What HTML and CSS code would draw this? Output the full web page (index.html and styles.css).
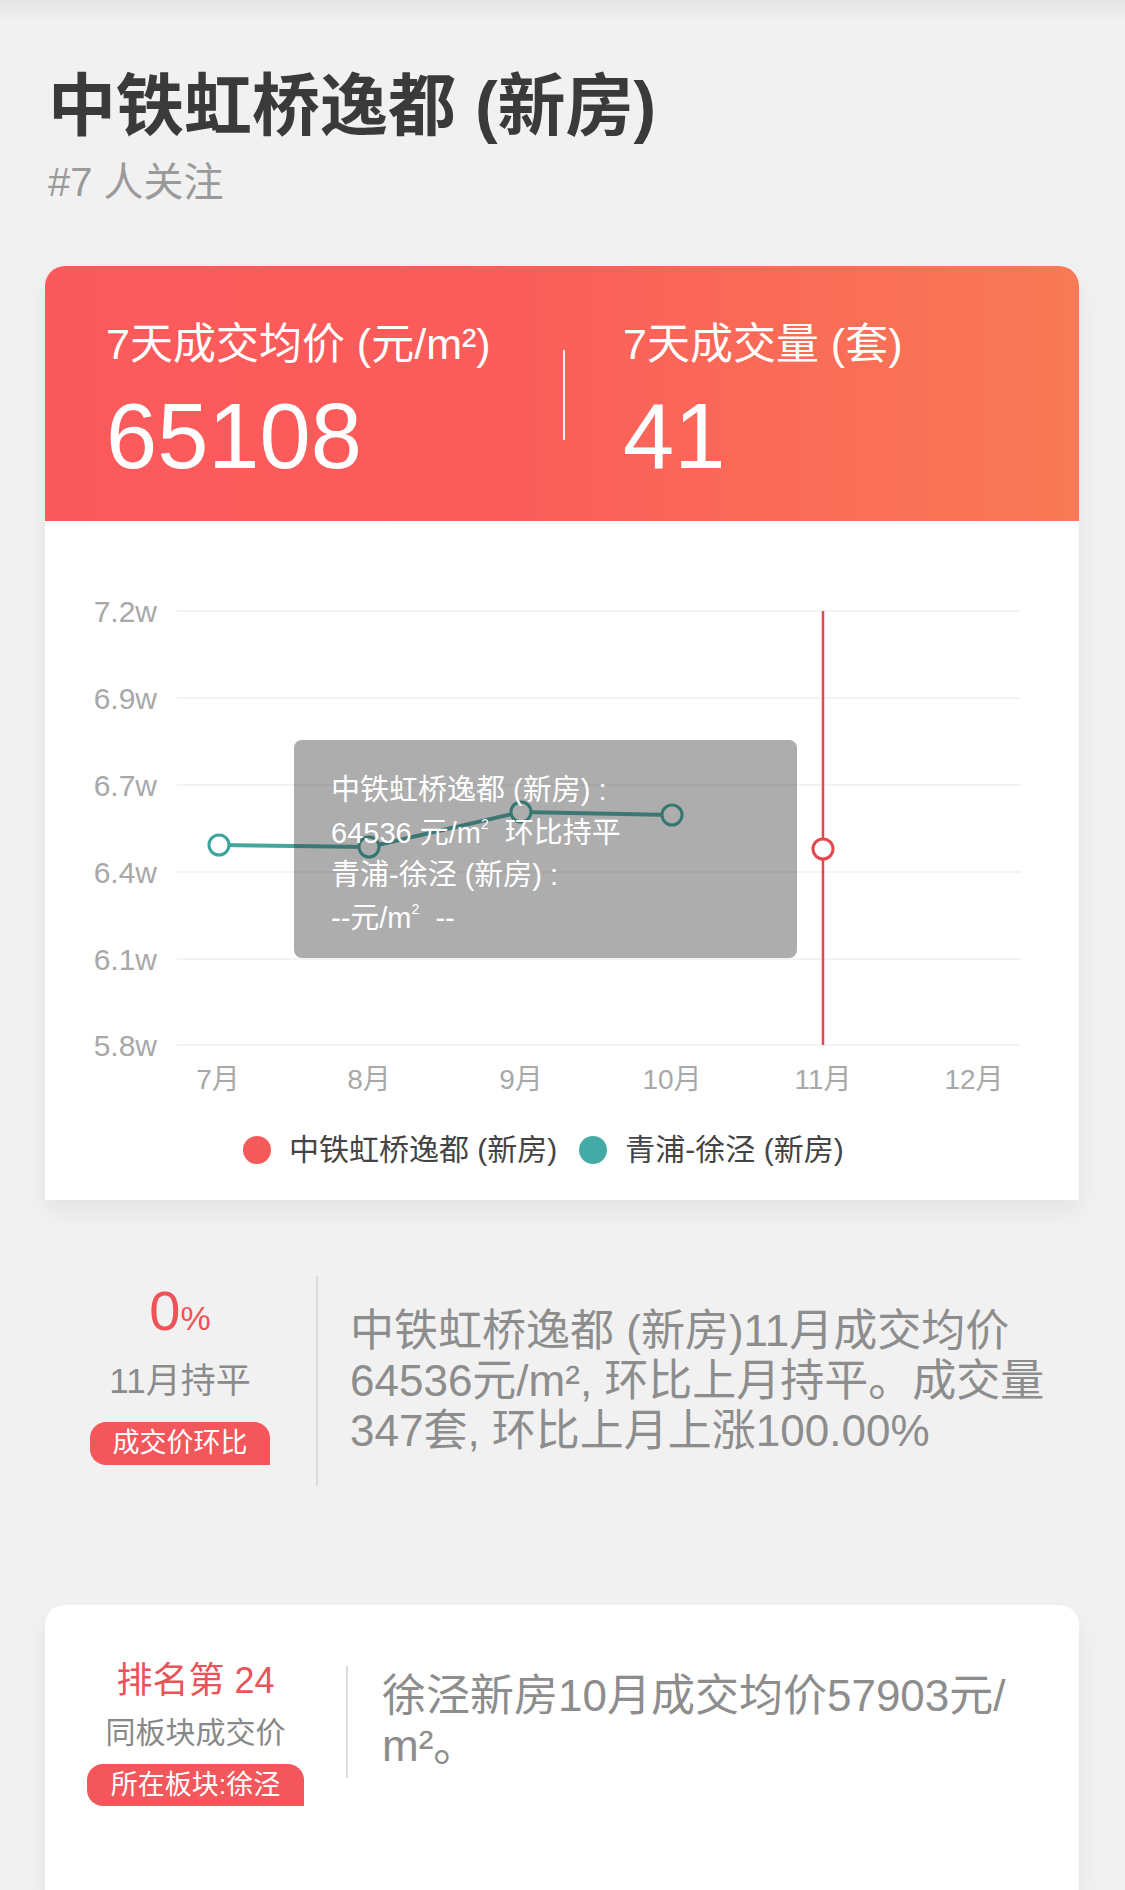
FILE: index.html
```html
<!DOCTYPE html>
<html lang="zh-CN">
<head>
    <meta charset="UTF-8">
    <meta name="viewport" content="width=device-width, initial-scale=1.0">
    <title>中铁虹桥逸都 (新房)</title>
    <link rel="stylesheet" href="styles.css">
</head>
<body>
    <header class="house-head">
        <h1 class="house-title">中铁虹桥逸都 (新房)</h1>
        <div class="house-follow">#7 人关注</div>
    </header>

    <section class="card price-card">
        <div class="price-top">
            <div class="price-col price-col-first">
                <div class="price-label">7天成交均价 (元/m²)</div>
                <div class="price-value">65108</div>
            </div>
            <div class="price-split"></div>
            <div class="price-col">
                <div class="price-label">7天成交量 (套)</div>
                <div class="price-value">41</div>
            </div>
        </div>

        <div class="chart">
            <svg class="chart-svg" width="1034" height="609" viewBox="0 0 1034 609">
                <g class="grid">
                    <line x1="132" y1="90" x2="976" y2="90"/>
                    <line x1="132" y1="177" x2="976" y2="177"/>
                    <line x1="132" y1="264" x2="976" y2="264"/>
                    <line x1="132" y1="351" x2="976" y2="351"/>
                    <line x1="132" y1="438" x2="976" y2="438"/>
                    <line x1="132" y1="524" x2="976" y2="524"/>
                </g>
                <g class="axis-y">
                    <text x="112" y="101">7.2w</text>
                    <text x="112" y="188">6.9w</text>
                    <text x="112" y="275">6.7w</text>
                    <text x="112" y="362">6.4w</text>
                    <text x="112" y="449">6.1w</text>
                    <text x="112" y="535">5.8w</text>
                </g>
                <g class="axis-x">
                    <text x="173" y="568">7月</text>
                    <text x="324" y="568">8月</text>
                    <text x="476" y="568">9月</text>
                    <text x="627" y="568">10月</text>
                    <text x="778" y="568">11月</text>
                    <text x="929" y="568">12月</text>
                </g>
                <line class="cursor" x1="778" y1="90" x2="778" y2="524"/>
                <polyline class="series-b" points="174,324 324,326 476,291 627,294"/>
                <g class="dots-b">
                    <circle cx="174" cy="324" r="10"/>
                    <circle cx="324" cy="326" r="10"/>
                    <circle cx="476" cy="291" r="10"/>
                    <circle cx="627" cy="294" r="10"/>
                </g>
                <circle class="dot-a" cx="778" cy="328" r="10"/>
            </svg>
            <div class="chart-tip">
                <div>中铁虹桥逸都 (新房) :</div>
                <div>64536 元/m<sup>2</sup>&nbsp; 环比持平</div>
                <div>青浦-徐泾 (新房) :</div>
                <div>--元/m<sup>2</sup>&nbsp; --</div>
            </div>
        </div>

        <div class="legend">
            <div class="legend-item"><span class="legend-dot dot-red"></span>中铁虹桥逸都 (新房)</div>
            <div class="legend-item"><span class="legend-dot dot-teal"></span>青浦-徐泾 (新房)</div>
        </div>
    </section>

    <section class="trend">
        <div class="trend-side">
            <div class="trend-rate">0<small>%</small></div>
            <div class="trend-note">11月持平</div>
            <div class="tag">成交价环比</div>
        </div>
        <div class="trend-split"></div>
        <p class="trend-text">中铁虹桥逸都 (新房)11月成交均价64536元/m², 环比上月持平。成交量347套, 环比上月上涨100.00%</p>
    </section>

    <section class="card rank-card">
        <div class="rank-side">
            <div class="rank-no">排名第 24</div>
            <div class="rank-note">同板块成交价</div>
            <div class="tag tag-wide">所在板块:徐泾</div>
        </div>
        <div class="rank-split"></div>
        <p class="rank-text">徐泾新房10月成交均价57903元/<wbr>m²。</p>
    </section>
</body>
</html>
```

FILE: styles.css
```css
body {
    margin: 0;
    width: 1125px;
    height: 1890px;
    overflow: hidden;
    background: linear-gradient(#e4e4e4, #f1f1f1 22px) no-repeat #f1f1f1;
    font-family: "Liberation Sans", "Noto Sans CJK SC", sans-serif;
}
.house-head {
    padding: 65px 0 0 48px;
}
.house-title {
    margin: 0;
    font-size: 68px;
    line-height: 82px;
    font-weight: bold;
    color: #3a3a3a;
}
.house-follow {
    margin-top: 11px;
    font-size: 40px;
    line-height: 48px;
    color: #9a9a9a;
}
.card {
    margin: 60px 0 0 45px;
    width: 1034px;
    background: #fff;
    border-radius: 20px 20px 0 0;
    box-shadow: 0 12px 26px rgba(0, 0, 0, 0.06);
}
.price-top {
    display: flex;
    padding: 52px 0 39px 61px;
    border-radius: 20px 20px 0 0;
    background: linear-gradient(90deg, #fb5a5c 0%, #fb5d5a 45%, #f97a55 100%);
    color: #fff;
}
.price-col-first {
    width: 457px;
}
.price-label {
    font-size: 43px;
    line-height: 52px;
}
.price-value {
    margin-top: 20px;
    font-size: 92px;
    line-height: 92px;
}
.price-split {
    align-self: center;
    width: 2px;
    height: 90px;
    margin: -10px 58px 0 0;
    background: rgba(255, 255, 255, 0.9);
}
.chart {
    position: relative;
    height: 609px;
}
.chart-svg {
    display: block;
}
.grid line {
    stroke: #efefef;
    stroke-width: 1.5;
}
.axis-y text,
.axis-x text {
    font-family: "Liberation Sans", "Noto Sans CJK SC", sans-serif;
    fill: #a8a8a8;
}
.axis-y text {
    font-size: 30px;
    text-anchor: end;
}
.axis-x text {
    font-size: 28px;
    text-anchor: middle;
}
.cursor {
    stroke: #e4474c;
    stroke-width: 2.5;
}
.series-b {
    fill: none;
    stroke: #45a59e;
    stroke-width: 4;
}
.dots-b circle {
    fill: #fff;
    stroke: #3aa39c;
    stroke-width: 3;
}
.dot-a {
    fill: #fff;
    stroke: #e4474c;
    stroke-width: 3;
}
.chart-tip {
    position: absolute;
    left: 249px;
    top: 219px;
    width: 503px;
    height: 218px;
    box-sizing: border-box;
    padding: 29px 0 0 37px;
    border-radius: 8px;
    background: rgba(50, 50, 50, 0.4);
    color: #fff;
    font-size: 29px;
    line-height: 42.5px;
}
.chart-tip sup {
    font-size: 14px;
    line-height: 0;
    vertical-align: 14px;
}
.legend {
    display: flex;
    align-items: center;
    padding: 0 0 30px 198px;
    font-size: 30px;
    line-height: 40px;
    color: #444;
}
.legend-item {
    display: flex;
    align-items: center;
}
.legend-item + .legend-item {
    margin-left: 22px;
}
.legend-dot {
    width: 28px;
    height: 28px;
    margin-right: 18px;
    border-radius: 50%;
}
.dot-red {
    background: #f55a5b;
}
.dot-teal {
    background: #44aaa5;
}
.trend {
    display: flex;
    align-items: flex-start;
    padding: 76px 0 0 90px;
}
.trend-side {
    width: 180px;
    margin-top: 7px;
    display: flex;
    flex-direction: column;
    align-items: center;
}
.trend-rate {
    font-size: 56px;
    line-height: 56px;
    color: #ef5358;
}
.trend-rate small {
    font-size: 34px;
}
.trend-note {
    margin-top: 14px;
    font-size: 35px;
    line-height: 42px;
    color: #8b8b8b;
}
.tag {
    width: 180px;
    height: 43px;
    margin-top: 20px;
    border-radius: 16px 16px 0 16px;
    background: #f4575b;
    color: #fff;
    font-size: 27px;
    line-height: 43px;
    text-align: center;
}
.trend-split {
    width: 2px;
    height: 210px;
    margin-left: 46px;
    background: #dcdcdc;
}
.trend-text {
    width: 715px;
    margin: 30px 0 0 32px;
    font-size: 44px;
    line-height: 50px;
    color: #8d8d8d;
}
.rank-card {
    display: flex;
    align-items: flex-start;
    min-height: 285px;
    margin-top: 119px;
    padding: 54px 0 0 42px;
    box-sizing: border-box;
}
.rank-side {
    width: 217px;
    display: flex;
    flex-direction: column;
    align-items: center;
}
.rank-no {
    font-size: 36px;
    line-height: 43px;
    color: #e9545a;
}
.rank-note {
    margin-top: 13px;
    font-size: 30px;
    line-height: 36px;
    color: #888;
}
.tag-wide {
    width: 217px;
    height: 42px;
    margin-top: 13px;
    line-height: 42px;
}
.rank-split {
    width: 2px;
    height: 112px;
    margin: 7px 0 0 42px;
    background: #dcdcdc;
}
.rank-text {
    width: 660px;
    margin: 12px 0 0 34px;
    font-size: 44px;
    line-height: 50px;
    color: #8d8d8d;
}
```
